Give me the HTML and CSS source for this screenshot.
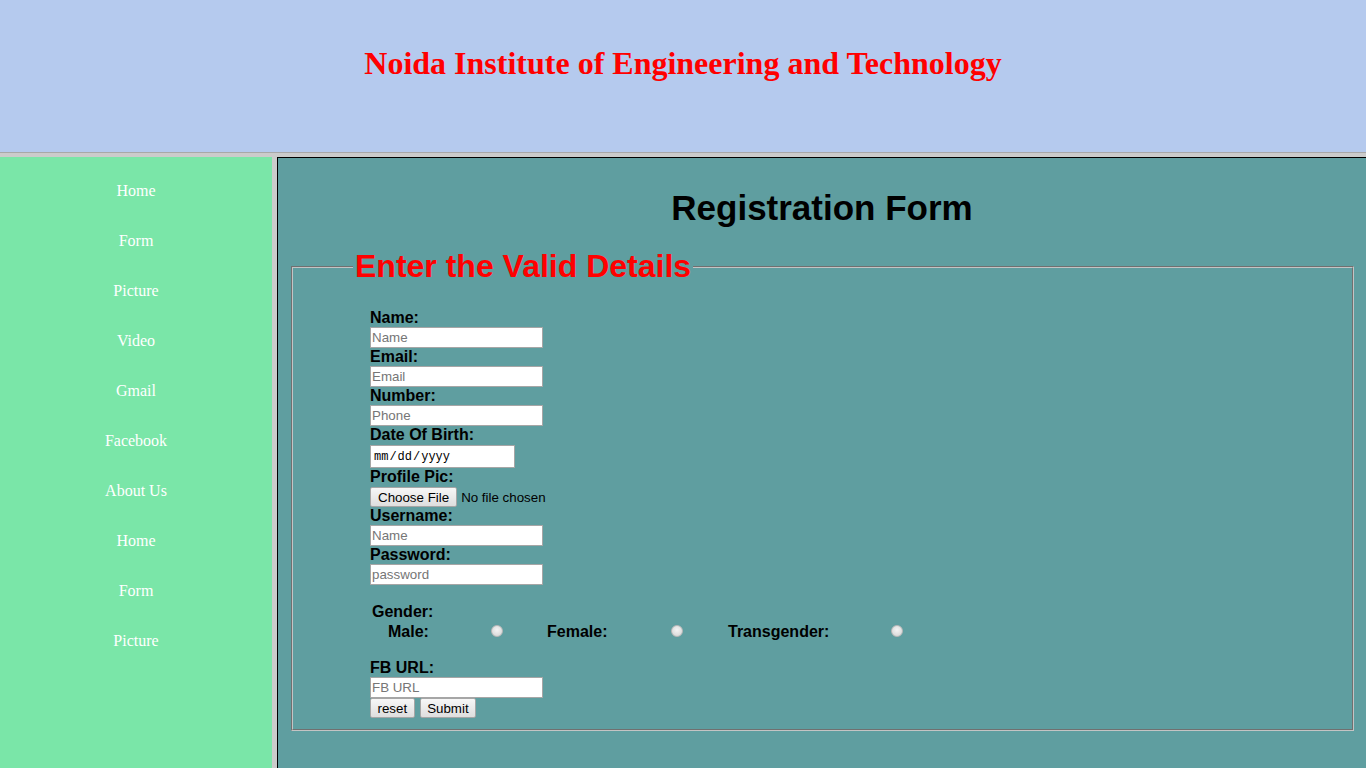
FILE: index.html
```html
<!DOCTYPE html>
<html lang="en">
<head>
<meta charset="utf-8">
<title>Noida Institute of Engineering and Technology</title>
<link rel="stylesheet" href="styles.css">
</head>
<body>
<header class="top">
  <h1 class="site-title">Noida Institute of Engineering and Technology</h1>
</header>
<div class="hsep"></div>
<div class="main">
  <nav class="side">
    <a href="#">Home</a>
    <a href="#">Form</a>
    <a href="#">Picture</a>
    <a href="#">Video</a>
    <a href="#">Gmail</a>
    <a href="#">Facebook</a>
    <a href="#">About Us</a>
    <a href="#">Home</a>
    <a href="#">Form</a>
    <a href="#">Picture</a>
  </nav>
  <div class="vsep"></div>
  <section class="content">
    <h1 class="form-title">Registration Form</h1>
    <form class="reg">
      <fieldset class="box">
        <legend class="legend">Enter the Valid Details</legend>
        <div class="fields">
          <label class="lbl" for="name">Name:</label>
          <input class="txt" id="name" type="text" placeholder="Name">
          <label class="lbl" for="email">Email:</label>
          <input class="txt" id="email" type="text" placeholder="Email">
          <label class="lbl" for="phone">Number:</label>
          <input class="txt" id="phone" type="text" placeholder="Phone">
          <label class="lbl" for="dob">Date Of Birth:</label>
          <input class="date" id="dob" type="date">
          <label class="lbl" for="pic">Profile Pic:</label>
          <input class="file" id="pic" type="file">
          <label class="lbl" for="user">Username:</label>
          <input class="txt" id="user" type="text" placeholder="Name">
          <label class="lbl" for="pass">Password:</label>
          <input class="txt" id="pass" type="password" placeholder="password">

          <div class="gender">
            <div class="gender-title">Gender:</div>
            <div class="gender-row">
              <span class="g-lbl first">Male:</span>
              <span class="g-cell"><input class="radio" type="radio" name="g"></span>
              <span class="g-lbl">Female:</span>
              <span class="g-cell"><input class="radio" type="radio" name="g"></span>
              <span class="g-lbl">Transgender:</span>
              <span class="g-cell"><input class="radio" type="radio" name="g"></span>
            </div>
          </div>

          <label class="lbl" for="fb">FB URL:</label>
          <input class="txt" id="fb" type="text" placeholder="FB URL">
          <div class="actions">
            <input class="btn" type="reset" value="reset">
            <input class="btn" type="submit" value="Submit">
          </div>
        </div>
      </fieldset>
    </form>
  </section>
</div>
</body>
</html>
```
FILE: styles.css
```css
html, body {
  margin: 0;
  padding: 0;
}
body {
  width: 1366px;
  height: 768px;
  overflow: hidden;
  font-family: "Liberation Sans", Arial, sans-serif;
}
.top {
  height: 152px;
  background: #b5caee;
  padding-top: 45px;
  box-sizing: border-box;
}
.site-title {
  margin: 0;
  text-align: center;
  font-family: "Liberation Serif", "Times New Roman", serif;
  font-size: 32px;
  font-weight: bold;
  color: #ff0000;
  line-height: 1.15;
}
.hsep {
  height: 5px;
  box-sizing: border-box;
  border-top: 1px solid #a8a8a8;
  background: #cbcbcb;
}
.main {
  display: flex;
  height: 611px;
}
.side {
  width: 272px;
  flex: none;
  background: #7ae6a8;
  padding-top: 9px;
  display: flex;
  flex-direction: column;
}
.side a {
  display: block;
  text-align: center;
  line-height: 50px;
  font-family: "Liberation Serif", "Times New Roman", serif;
  font-size: 16px;
  color: #ffffff;
  text-decoration: none;
}
.vsep {
  width: 5px;
  flex: none;
  background: #cbcbcb;
}
.content {
  flex: 1;
  background: #5f9ea0;
  border-top: 1px solid #000;
  border-left: 1px solid #000;
}
.form-title {
  margin: 30px 0 0;
  text-align: center;
  font-size: 35px;
  font-weight: bold;
  color: #000;
  line-height: 1.15;
}
.reg {
  margin: 0;
}
.box {
  margin: 20px 12px 0 13px;
  padding: 24px 0 11px 60px;
  border: 2px groove #c4c4c4;
  min-width: 0;
}
.legend {
  padding: 0 2px;
  font-size: 32px;
  font-weight: bold;
  color: #ff0000;
  line-height: 1.15;
}
.fields {
  margin-left: 17px;
  display: flex;
  flex-direction: column;
  align-items: flex-start;
}
.lbl {
  display: block;
  font-size: 16px;
  font-weight: bold;
  line-height: 18px;
  color: #000;
}
.txt {
  display: block;
  width: 173px;
  height: 21px;
  box-sizing: border-box;
  margin: 0;
  padding: 1px 1px;
  border: 1px solid #a6a6a6;
  background: #fff;
  font-family: "Liberation Sans", Arial, sans-serif;
  font-size: 13.33px;
  color: #000;
  outline: none;
}
.txt::placeholder {
  color: #767676;
}
.date {
  display: block;
  width: 145px;
  height: 23px;
  box-sizing: border-box;
  margin: 1px 0 0;
  padding: 1px 2px;
  border: 1px solid #a6a6a6;
  background: #fff;
  font-family: "Liberation Mono", monospace;
  font-size: 12px;
  color: #000;
}
.date::-webkit-calendar-picker-indicator {
  display: none;
}
.date::-webkit-inner-spin-button {
  display: none;
}
.file {
  display: block;
  height: 21px;
  margin: 0;
  padding: 0;
  font-family: "Liberation Sans", Arial, sans-serif;
  font-size: 13.33px;
  color: #000;
}
.file::file-selector-button,
.btn {
  font-family: "Liberation Sans", Arial, sans-serif;
  font-size: 13.33px;
  color: #000;
  height: 20px;
  padding: 0 6.5px;
  border: 1px solid #a6a6a6;
  border-radius: 2px;
  background: linear-gradient(#f7f7f7, #dedede);
}
.file::file-selector-button {
  margin: 1px 4px 0 0;
  padding: 0 7px;
}
.gender {
  margin: 18px 0 18px 2px;
}
.gender-title {
  font-size: 16px;
  font-weight: bold;
  line-height: 18px;
}
.gender-row {
  margin-top: 2px;
  margin-left: -2px;
  display: grid;
  grid-template-columns: 121px 56px 124px 57px 163px 13px;
  align-items: center;
  height: 18px;
}
.g-lbl {
  font-size: 16px;
  font-weight: bold;
  line-height: 18px;
}
.g-lbl.first {
  padding-left: 18px;
}
.g-cell {
  display: flex;
  align-items: center;
}
.radio {
  appearance: none;
  -webkit-appearance: none;
  width: 12px;
  height: 12px;
  margin: -3px 0 0;
  border: 1px solid #b8b8b8;
  border-radius: 50%;
  background: radial-gradient(circle at 50% 40%, #f4f4f4 0%, #dcdcdc 70%, #cfcfcf 100%);
}
.actions {
  display: flex;
  gap: 5px;
  margin-top: 0;
}
.btn {
  margin: 0;
}
```
